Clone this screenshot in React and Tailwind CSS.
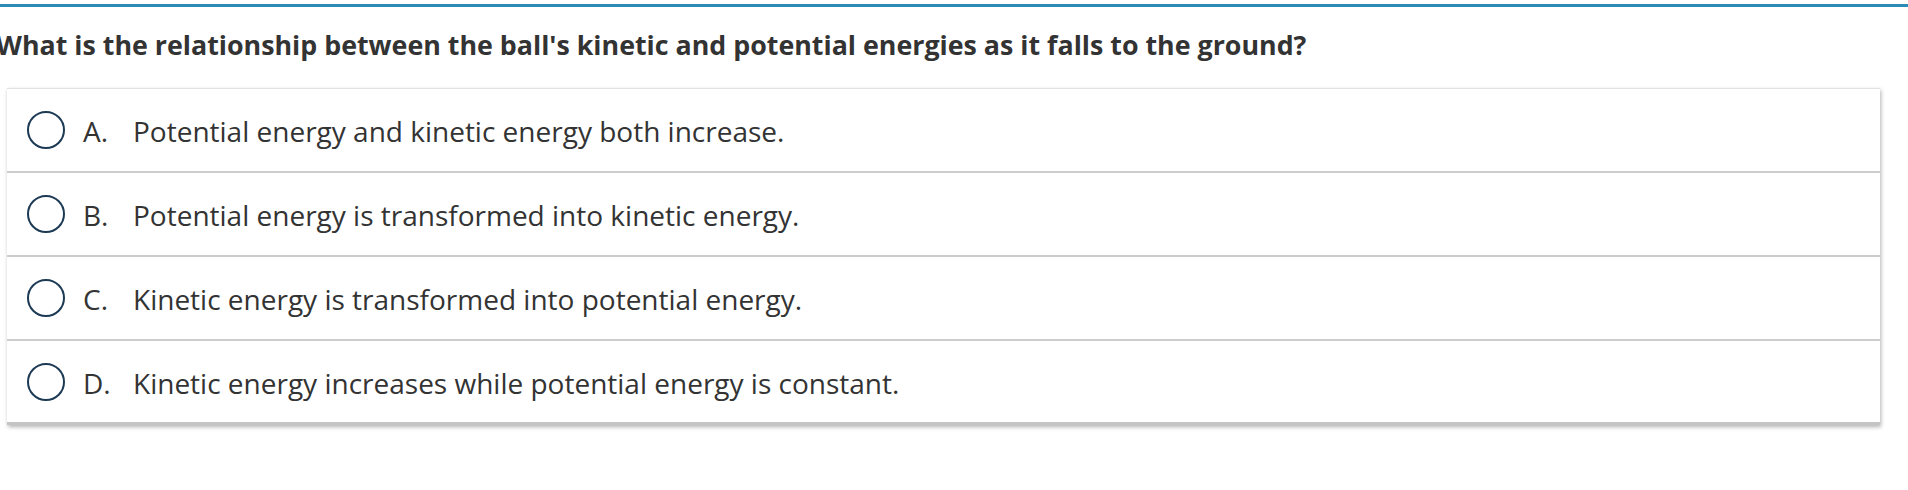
const options = [
  { letter: "A.", text: "Potential energy and kinetic energy both increase." },
  { letter: "B.", text: "Potential energy is transformed into kinetic energy." },
  { letter: "C.", text: "Kinetic energy is transformed into potential energy." },
  { letter: "D.", text: "Kinetic energy increases while potential energy is constant." },
];

function App() {
  return (
    <div className="min-h-screen bg-white text-[#333333]" style={{ fontFamily: '"Open Sans", sans-serif' }}>
      <div className="pt-[4px]">
        <div className="h-[3px] bg-[#2b8bb6]" />
      </div>

      <h1 className="mt-[20px] -ml-[4px] whitespace-nowrap text-[26.8px] leading-[36px] font-bold text-[#333333]">
        What is the relationship between the ball's kinetic and potential energies as it falls to the ground?
      </h1>

      <div className="mt-[25px] ml-[7px] w-[1873px] border-t border-[#e2e2e2] bg-white shadow-[1px_2px_4px_rgba(0,0,0,0.3)]">
        {options.map((opt, i) => (
          <label
            key={opt.letter}
            className={`flex h-[84px] items-center cursor-pointer ${
              i < options.length - 1 ? "border-b-2 border-[#cccccc]" : "border-b-[3px] border-[#c4c4c4]"
            }`}
          >
            <span className="ml-[20px] h-[38px] w-[38px] shrink-0 rounded-full border-2 border-[#1d3a55]" />
            <span className="ml-[18px] w-[50px] pt-[2px] text-[28px] leading-[36px]">{opt.letter}</span>
            <span className="pt-[2px] text-[28px] leading-[36px]">{opt.text}</span>
          </label>
        ))}
      </div>
    </div>
  );
}

export default App;
